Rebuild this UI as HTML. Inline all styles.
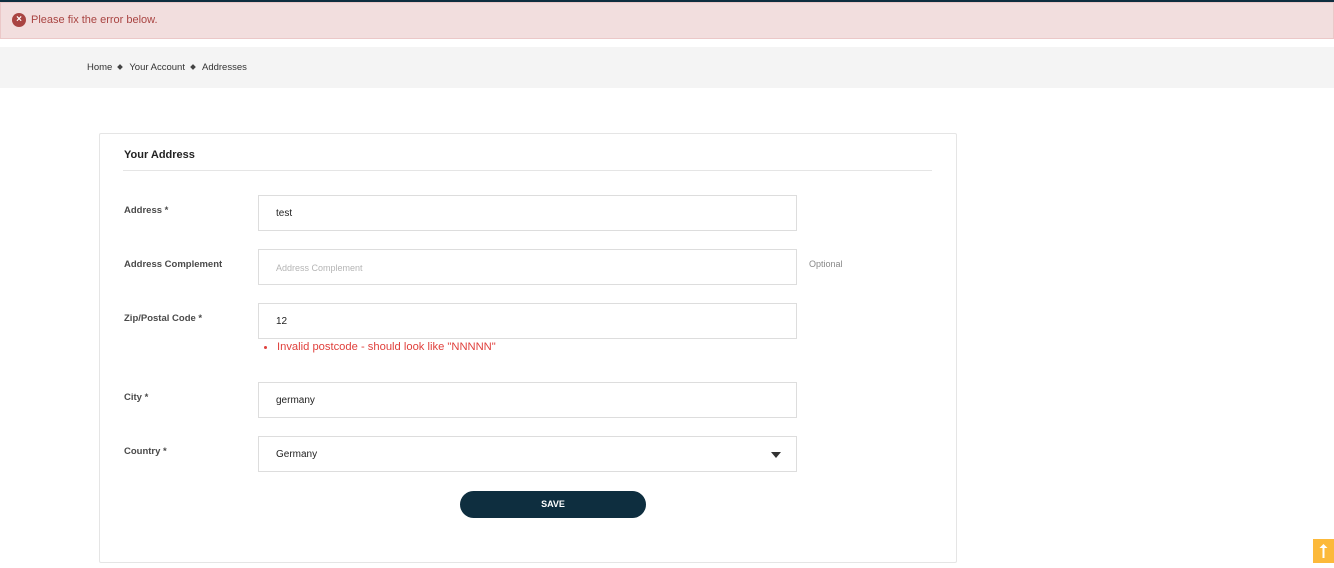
<!DOCTYPE html>
<html><head><meta charset="utf-8"><style>
*{box-sizing:border-box;margin:0;padding:0}
body{width:1334px;height:567px;overflow:hidden;background:#fff;font-family:"Liberation Sans",Arial,sans-serif;position:relative}
.topline{position:absolute;left:0;top:0;width:1334px;height:2px;background:#0e2e3f}
.alert{position:absolute;left:0;top:2px;width:1334px;height:37px;background:#f2dede;border:1px solid #ebc8c8;color:#a94442;font-size:11px;line-height:34px;padding-left:30px}
.alert .ic{position:absolute;left:11px;top:10px;width:14px;height:14px;border-radius:50%;background:#a94442;color:#fff;font-size:10px;line-height:14px;text-align:center;font-weight:bold}
.bc{position:absolute;left:0;top:47px;width:1334px;height:41px;background:#f4f4f4;font-size:9.5px;color:#333;line-height:42px;padding-left:87px}
.bc .d{display:inline-block;width:4px;height:4px;background:#444;transform:rotate(45deg);margin:0 7px 1px 6px}
.card{position:absolute;left:99px;top:133px;width:858px;height:430px;border:1px solid #e5e5e5;border-radius:2px}
.title{position:absolute;left:24px;top:15px;font-size:11px;font-weight:bold;color:#222}
.hr{position:absolute;left:23px;right:24px;top:36px;height:1px;background:#e5e5e5}
.lbl{position:absolute;left:24px;font-size:9.5px;font-weight:bold;color:#4a4a4a}
.inp{position:absolute;left:158px;width:539px;height:36px;border:1px solid #ddd;font-size:10px;color:#222;line-height:36px;padding-left:17px}
.ph{color:#b5b5b5;font-size:9px}
.opt{position:absolute;left:709px;top:125px;font-size:9px;color:#888}
.err{position:absolute;left:164px;top:207px;font-size:11.2px;color:#e0403c}
.err span{display:inline-block;width:3px;height:3px;background:#e0403c;border-radius:50%;margin-right:10px;vertical-align:middle}
.caret{position:absolute;right:15px;top:15px;width:0;height:0;border-left:5px solid transparent;border-right:5px solid transparent;border-top:6px solid #333}
.btn{position:absolute;left:360px;top:357px;width:186px;height:27px;background:#0e2e3f;border-radius:14px;color:#fff;font-size:9px;font-weight:bold;text-align:center;line-height:27px}
.top{position:absolute;left:1313px;top:539px;width:21px;height:24px;background:#fcb93a}
</style></head><body>
<div class="topline"></div>
<div class="alert"><span class="ic">×</span>Please fix the error below.</div>
<div class="bc">Home<span class="d"></span>Your Account<span class="d"></span>Addresses</div>
<div class="card">
<div class="title">Your Address</div><div class="hr"></div>
<div class="lbl" style="top:71px">Address *</div>
<div class="inp" style="top:61px">test</div>
<div class="lbl" style="top:125px">Address Complement</div>
<div class="inp ph" style="top:115px">Address Complement</div>
<div class="opt">Optional</div>
<div class="lbl" style="top:179px">Zip/Postal Code *</div>
<div class="inp" style="top:169px">12</div>
<div class="err"><span></span>Invalid postcode - should look like "NNNNN"</div>
<div class="lbl" style="top:258px">City *</div>
<div class="inp" style="top:248px">germany</div>
<div class="lbl" style="top:312px">Country *</div>
<div class="inp" style="top:302px">Germany<div class="caret"></div></div>
<div class="btn">SAVE</div>
</div>
<div class="top"><svg width="21" height="24"><rect x="9.5" y="8" width="2" height="11" fill="#fff"/><path d="M6.5 9 L10.5 5 L14.5 9 Z" fill="#fff"/></svg></div>
</body></html>
